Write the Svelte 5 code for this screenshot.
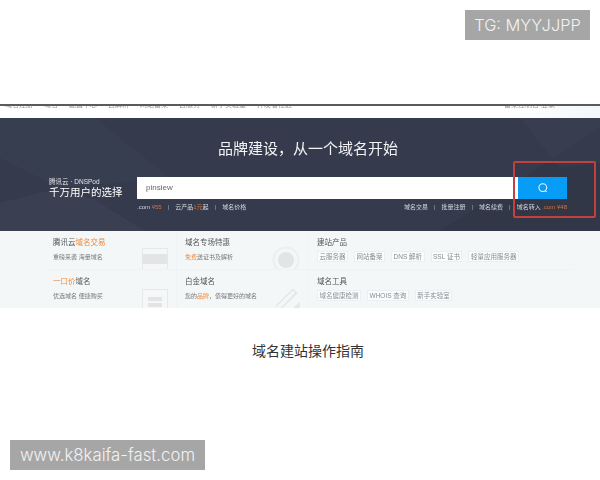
<script>
    const navLeft = ["域名注册", "域名", "配置中心", "云解析", "网站备案", "云服务", "新手实验室", "开发者社区"];

    const topLinks = [
        { text: ".com ", price: "¥55" },
        { text: "云产品", price: "1元", tail: "起" },
        { text: "域名价格" },
    ];

    const rightLinks = ["域名交易", "批量注册", "域名续费"];

    const productTags = ["云服务器", "网站备案", "DNS 解析", "SSL 证书", "轻量应用服务器"];
    const toolTags = ["域名健康检测", "WHOIS 查询", "新手实验室"];
</script>

<div class="page">
    <div class="badge top-badge">TG: MYYJJPP</div>

    <section class="shot">
        <nav class="nav">
            <div class="nav-left">
                {#each navLeft as item}
                    <span>{item}</span>
                {/each}
            </div>
            <div class="nav-right">
                <span>备案控制台 登录</span>
                <svg viewBox="0 0 10 10" class="nav-icon">
                    <circle cx="4.5" cy="4.5" r="3" fill="none" stroke="#889" />
                </svg>
            </div>
        </nav>

        <div class="hero">
            <svg class="hero-bg" viewBox="0 0 600 113" preserveAspectRatio="none">
                <polygon points="0,113 0,85 60,70 95,82 145,113" fill="#454b5c" opacity="0.35" />
                <polygon points="0,0 95,0 170,60 60,70 0,40" fill="#3d4457" opacity="0.3" />
                <polygon points="440,113 600,10 600,113" fill="#2c3140" opacity="0.4" />
                <polygon points="520,0 600,0 600,45 560,50" fill="#3f4658" opacity="0.3" />
            </svg>

            <h1>品牌建设，从一个域名开始</h1>

            <div class="search-row">
                <div class="slogan">
                    <small>腾讯云 · DNSPod</small>
                    <strong>千万用户的选择</strong>
                </div>
                <div class="search">
                    <div class="search-input">pinsiew</div>
                    <div class="search-btn">
                        <svg viewBox="0 0 12 12" class="search-icon">
                            <circle cx="5.8" cy="5.6" r="3.9" fill="none" stroke="#e6f6ff" stroke-width="1.1" />
                            <path d="M8.2 8.6l1.5 1.3" stroke="#e6f6ff" stroke-width="1.1" fill="none" />
                        </svg>
                    </div>
                </div>
            </div>

            <div class="links">
                <div class="link-group">
                    {#each topLinks as link, i}
                        {#if i > 0}<i>|</i>{/if}
                        <span>{link.text}{#if link.price}<em>{link.price}</em>{/if}{link.tail ?? ""}</span>
                    {/each}
                </div>
                <div class="link-group">
                    {#each rightLinks as link}
                        <span>{link}</span>
                        <i>|</i>
                    {/each}
                    <span>域名转入 <em>.com ¥48</em></span>
                </div>
            </div>
        </div>

        <div class="panel">
            <div class="cell">
                <h3>腾讯云<b>域名交易</b></h3>
                <p>重磅来袭 海量域名</p>
                <svg class="deco deco-a" viewBox="0 0 26 22">
                    <rect x="0.5" y="0.5" width="25" height="21" fill="#f4f6f7" stroke="#e6e8ea" />
                    <rect x="0.5" y="6" width="25" height="10" fill="#e2e4e6" />
                </svg>
            </div>
            <div class="cell">
                <h3>域名专场特惠</h3>
                <p><b>免费</b>送证书及解析</p>
                <svg class="deco deco-b" viewBox="0 0 28 28">
                    <circle cx="14" cy="14" r="12.5" fill="none" stroke="#eceef0" stroke-width="2" />
                    <circle cx="14" cy="14" r="8" fill="#e2e4e6" />
                </svg>
            </div>
            <div class="cell wide">
                <h3>建站产品</h3>
                <div class="tags">
                    {#each productTags as tag}
                        <span>{tag}</span>
                    {/each}
                </div>
            </div>
            <div class="cell">
                <h3><b>一口价</b>域名</h3>
                <p>优选域名 便捷购买</p>
                <svg class="deco deco-a low" viewBox="0 0 26 22">
                    <rect x="0.5" y="0.5" width="25" height="24" fill="#f6f7f8" stroke="#e6e8ea" />
                    <rect x="6" y="8" width="14" height="4" fill="#e2e4e6" />
                    <rect x="6" y="14" width="14" height="4" fill="#e2e4e6" />
                </svg>
            </div>
            <div class="cell">
                <h3>白金域名</h3>
                <p>您的<b>品牌</b>，值得更好的域名</p>
                <svg class="deco deco-c" viewBox="0 0 28 24">
                    <path d="M2 21L20 3l4 3L7 24M8 23L25 6" fill="none" stroke="#e4e6e8" stroke-width="1.5" />
                    <path d="M20 24l8-8v8z" fill="#e4e6e8" />
                </svg>
            </div>
            <div class="cell wide">
                <h3>域名工具</h3>
                <div class="tags">
                    {#each toolTags as tag}
                        <span>{tag}</span>
                    {/each}
                </div>
            </div>
        </div>

        <div class="red-box"></div>
    </section>

    <h2>域名建站操作指南</h2>

    <div class="badge bottom-badge">www.k8kaifa-fast.com</div>
</div>

<style>
    :global(body) {
        background: #fff;
    }

    .page {
        position: relative;
        width: 600px;
        height: 480px;
        padding-top: 104px;
        box-sizing: border-box;
        overflow: hidden;
        font-family: "Liberation Sans", "Noto Sans CJK SC", sans-serif;
    }

    .badge {
        position: absolute;
        display: flex;
        align-items: center;
        justify-content: center;
        height: 30px;
        background: #a6a6a6;
        color: #f2f2f2;
        font-family: Inter, "Liberation Sans", sans-serif;
    }

    .top-badge {
        top: 10px;
        right: 10px;
        width: 125px;
        font-size: 16.4px;
        font-weight: 300;
    }

    .bottom-badge {
        left: 10px;
        bottom: 10px;
        width: 195px;
        font-size: 16.8px;
        font-weight: 300;
    }

    .shot {
        position: relative;
        filter: blur(0.5px);
    }

    .nav {
        height: 14px;
        box-sizing: border-box;
        border-top: 2px solid #5b5b5b;
        background: #fff;
        display: flex;
        justify-content: space-between;
        overflow: hidden;
        font-size: 7px;
        color: #999;
    }

    .nav-left {
        display: flex;
        gap: 11px;
        padding-left: 5px;
        margin-top: -7px;
    }

    .nav-right {
        display: flex;
        gap: 30px;
        padding-right: 8px;
        margin-top: -7px;
        background: linear-gradient(90deg, #fff, #f3f7fb);
    }

    .nav-icon {
        width: 7px;
        height: 7px;
    }

    .hero {
        position: relative;
        height: 113px;
        box-sizing: border-box;
        padding-top: 21px;
        background: #353b4c;
        color: #fff;
    }

    .hero-bg {
        position: absolute;
        inset: 0;
        width: 100%;
        height: 100%;
    }

    h1 {
        position: relative;
        margin: 0 0 18px;
        text-align: center;
        font-size: 15px;
        line-height: 20px;
        font-weight: 400;
        color: #f2f3f5;
        padding-left: 16px;
    }

    .search-row {
        position: relative;
        display: flex;
        align-items: center;
        gap: 14px;
        padding-left: 49px;
    }

    .slogan {
        display: flex;
        flex-direction: column;
        width: 74px;
        white-space: nowrap;
    }

    .slogan small {
        font-size: 6.5px;
        line-height: 9px;
        color: #dfe1e6;
    }

    .slogan strong {
        font-size: 10.5px;
        line-height: 13px;
        font-weight: 400;
    }

    .search {
        display: flex;
        width: 430px;
        height: 22px;
    }

    .search-input {
        flex: 1;
        background: #fff;
        color: #666;
        font-size: 8px;
        line-height: 22px;
        padding-left: 9px;
    }

    .search-btn {
        width: 49px;
        background: #079cf5;
        display: flex;
        align-items: center;
        justify-content: center;
    }

    .search-icon {
        width: 12px;
        height: 12px;
    }

    .links {
        position: relative;
        display: flex;
        justify-content: space-between;
        width: 430px;
        margin: 4px 0 0 137px;
        font-size: 6px;
        line-height: 9px;
        color: #d5d8de;
    }

    .link-group {
        display: flex;
        gap: 6px;
        white-space: nowrap;
    }

    .link-group i {
        font-style: normal;
        color: #a5a9b3;
    }

    .link-group em {
        font-style: normal;
        color: #d9713c;
    }

    .panel {
        height: 77px;
        background: #f4f7f8;
        display: grid;
        grid-template-columns: 132px 132px 1fr;
        grid-template-rows: 39px 38px;
        padding-left: 45px;
        box-sizing: border-box;
        color: #555;
    }

    .cell {
        position: relative;
        box-sizing: border-box;
        padding: 6px 8px 0;
        border-right: 1px solid #f0f3f4;
        overflow: hidden;
    }

    .cell:nth-child(-n + 3) {
        border-bottom: 1px solid #eff2f3;
    }

    .cell.wide {
        border-right: none;
        margin-right: 28px;
    }

    h3 {
        margin: 0 0 3px;
        font-size: 7.5px;
        line-height: 11px;
        font-weight: 400;
        color: #555;
    }

    .cell b {
        font-weight: 400;
        color: #ec8a3e;
    }

    p {
        margin: 5px 0 0;
        font-size: 6px;
        line-height: 9px;
        color: #777;
    }

    .tags {
        display: flex;
        gap: 6px;
    }

    .tags span {
        padding: 0 1.5px;
        background: #fbfcfd;
        border: 1px solid #eceff1;
        font-size: 6.5px;
        line-height: 9px;
        color: #8a8d91;
        white-space: nowrap;
    }

    .deco {
        position: absolute;
    }

    .deco-a {
        right: 8px;
        top: 17px;
        width: 26px;
        height: 22px;
    }

    .deco-a.low {
        top: 19px;
    }

    .deco-b {
        right: 8px;
        top: 15px;
        width: 28px;
        height: 28px;
    }

    .deco-c {
        right: 8px;
        top: 17px;
        width: 26px;
        height: 22px;
    }

    .red-box {
        position: absolute;
        left: 513px;
        top: 57px;
        width: 83px;
        height: 57px;
        box-sizing: border-box;
        border: 2px solid #c4403c;
        border-radius: 2px;
    }

    h2 {
        margin: 33px 0 0;
        text-align: center;
        font-size: 14px;
        line-height: 20px;
        font-weight: 400;
        color: #333;
        padding-left: 16px;
    }
</style>
